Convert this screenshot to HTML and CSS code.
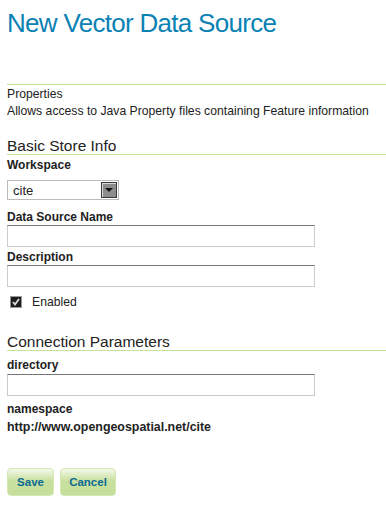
FILE: index.html
```html
<!DOCTYPE html>
<html>

	<head>
		<meta charset="UTF-8">
		<title>New Vector Data Source</title>
		<link rel="stylesheet" href="styles.css">
	</head>

	<body>
		<div class="page">
			<h1 class="page-title">New Vector Data Source</h1>
			<div class="store-type">
				<div class="store-name">Properties</div>
				<div class="store-desc">Allows access to Java Property files containing Feature information</div>
			</div>

			<h3 class="section">Basic Store Info</h3>
			<div class="field">
				<label class="label">Workspace</label>
				<div class="select">
					<span class="select-value">cite</span>
					<span class="select-arrow"></span>
				</div>
			</div>
			<div class="field">
				<label class="label">Data Source Name</label>
				<input class="text" type="text">
			</div>
			<div class="field">
				<label class="label">Description</label>
				<input class="text" type="text">
			</div>
			<div class="check-row">
				<span class="checkbox">
					<svg width="8" height="8" viewBox="0 0 8 8"><path d="M1 4 L3 6.5 L7 1" fill="none" stroke="#ddd" stroke-width="1.8"/></svg>
				</span>
				<span class="check-label">Enabled</span>
			</div>

			<h3 class="section conn">Connection Parameters</h3>
			<div class="field first">
				<label class="label">directory</label>
				<input class="text" type="text">
			</div>
			<div class="field ns">
				<label class="label">namespace</label>
				<div class="value">http://www.opengeospatial.net/cite</div>
			</div>

			<div class="buttons">
				<a class="btn save" href="javascript:;">Save</a>
				<a class="btn cancel" href="javascript:;">Cancel</a>
			</div>
		</div>
	</body>

</html>
```

FILE: styles.css
```css
body {
	margin: 0;
	background: #fff;
	color: #222;
	font-family: "Liberation Sans", Arial, sans-serif;
}

.page {
	padding: 0 0 0 7px;
}

.page-title {
	margin: 0 0 1px;
	padding: 7px 0 0 0;
	height: 85px;
	box-sizing: border-box;
	font-weight: normal;
	font-size: 26px;
	letter-spacing: -0.7px;
	line-height: 32px;
	color: #0a82b4;
	border-bottom: 1px solid #c5e29a;
}

.store-type {
	font-size: 12.2px;
	line-height: 17px;
}

.section {
	margin: 17px 0 0;
	font-size: 15.5px;
	font-weight: normal;
	line-height: 17px;
	border-bottom: 1px solid #c5e29a;
	color: #222;
}

.conn {
	margin-top: 25px;
}

.field {
	display: flex;
	flex-direction: column;
	align-items: flex-start;
	padding-top: 3px;
}

.field.first {
	padding-top: 7px;
}

.field.ns {
	padding-top: 6px;
}

.label {
	font-size: 12px;
	font-weight: bold;
	line-height: 14px;
	margin-bottom: 1px;
}

.field.first .label {
	margin-bottom: 2px;
}

.field.ns .label {
	margin-bottom: 4px;
}

.select {
	width: 112px;
	height: 20px;
	margin: 7px 0 7px;
	border: 1px solid #bbb;
	box-sizing: border-box;
	display: flex;
	align-items: center;
	justify-content: space-between;
	padding: 0 1px 0 5px;
}

.select-value {
	font-size: 13px;
}

.select-arrow {
	width: 16px;
	height: 16px;
	box-sizing: border-box;
	background: #8c8c8c;
	border: 1px solid #3a3a3a;
	box-shadow: inset 1px 1px 0 #d8d8d8;
	position: relative;
}

.select-arrow:after {
	content: "";
	position: absolute;
	left: 3px;
	top: 5px;
	border-left: 4px solid transparent;
	border-right: 4px solid transparent;
	border-top: 4px solid #111;
}

.text {
	width: 308px;
	height: 22px;
	box-sizing: border-box;
	margin: 0;
	border: 1px solid #ccc;
	border-top: 1px solid #777;
	background: #fff;
}

.check-row {
	display: flex;
	align-items: center;
	padding: 9px 0 0 3px;
	height: 12px;
}

.checkbox {
	width: 12px;
	height: 12px;
	box-sizing: border-box;
	background: #1e1e1e;
	border: 1px solid #999;
	display: flex;
	align-items: center;
	justify-content: center;
}

.check-label {
	font-size: 12.2px;
	margin-left: 10px;
}

.value {
	font-size: 12.4px;
	font-weight: bold;
	line-height: 14px;
}

.buttons {
	display: flex;
	gap: 6px;
	padding-top: 34px;
}

.btn {
	display: block;
	height: 28px;
	line-height: 27px;
	text-align: center;
	border: 1px solid #d3e8b3;
	border-radius: 4px;
	box-sizing: border-box;
	background: linear-gradient(#f4f9ea, #c8e09e 45%, #c6df9c);
	color: #0d6a94;
	font-size: 11.5px;
	font-weight: bold;
	text-decoration: none;
}

.save {
	width: 47px;
}

.cancel {
	width: 56px;
}
```
